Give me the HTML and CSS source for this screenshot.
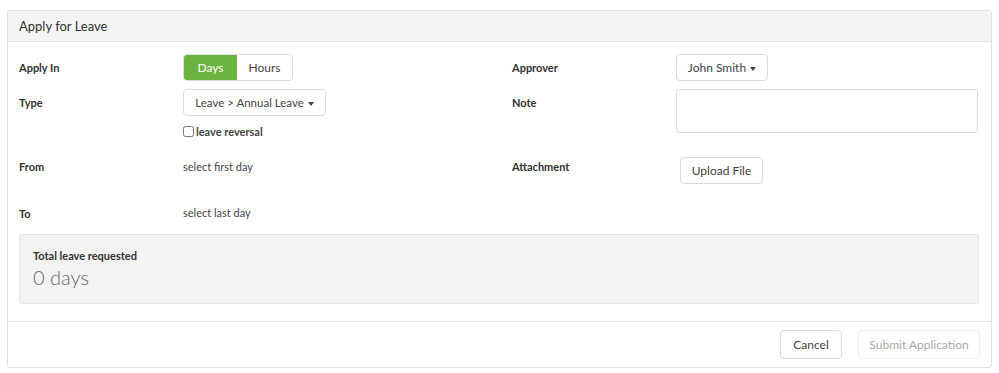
FILE: index.html
```html
<!DOCTYPE html>
<html lang="en">
<head>
  <meta charset="UTF-8">
  <title>Apply for Leave</title>
  <link rel="stylesheet" href="styles.css">
</head>
<body>
  <div class="panel">
    <div class="panel-heading">Apply for Leave</div>

    <div class="panel-body">
      <div class="form-grid">
        <div class="col col-left">
          <div class="row row-1">
            <div class="label">Apply In</div>
            <div class="value">
              <div class="toggle">
                <button class="toggle-btn active">Days</button>
                <button class="toggle-btn">Hours</button>
              </div>
            </div>
          </div>
          <div class="row row-2">
            <div class="label">Type</div>
            <div class="value">
              <button class="btn dropdown type-select">Leave &gt; Annual Leave <span class="caret"></span></button>
              <label class="check"><input type="checkbox"> leave reversal</label>
            </div>
          </div>
          <div class="row row-3">
            <div class="label">From</div>
            <div class="value text">select first day</div>
          </div>
          <div class="row row-4">
            <div class="label">To</div>
            <div class="value text">select last day</div>
          </div>
        </div>

        <div class="col col-right">
          <div class="row row-1">
            <div class="label">Approver</div>
            <div class="value">
              <button class="btn dropdown approver">John Smith <span class="caret"></span></button>
            </div>
          </div>
          <div class="row row-2">
            <div class="label">Note</div>
            <div class="value">
              <textarea class="note"></textarea>
            </div>
          </div>
          <div class="row row-3">
            <div class="label">Attachment</div>
            <div class="value">
              <button class="btn upload">Upload File</button>
            </div>
          </div>
        </div>
      </div>

      <div class="total">
        <div class="total-label">Total leave requested</div>
        <div class="total-value">0 days</div>
      </div>
    </div>

    <div class="panel-footer">
      <button class="btn cancel">Cancel</button>
      <button class="btn disabled">Submit Application</button>
    </div>
  </div>
</body>
</html>
```

FILE: styles.css
```css
body {
  margin: 0;
  padding: 10px 7px 0 7px;
  font-family: Lato, "Liberation Sans", sans-serif;
  color: #333;
  background: #fff;
}

.panel {
  width: 985px;
  border: 1px solid #e2e2e2;
  border-radius: 3px;
  box-sizing: border-box;
}

.panel-heading {
  height: 31px;
  padding: 0 11px;
  line-height: 30px;
  font-size: 13px;
  color: #333;
  background: #f5f5f5;
  border-bottom: 1px solid #e6e6e6;
  box-sizing: border-box;
}

.panel-body {
  padding: 12px 12px 17px 11px;
}

.form-grid {
  display: flex;
}

.col-left {
  width: 493px;
  flex-shrink: 0;
}

.col-right {
  flex: 1;
}

.row {
  display: flex;
  align-items: flex-start;
}

.row-1 { height: 35px; }
.row-2 { height: 65px; }
.row-3 { height: 46px; }
.row-4 { height: 34px; }

.label {
  width: 164px;
  flex-shrink: 0;
  padding-top: 7px;
  font-size: 11px;
  line-height: 14px;
  font-weight: bold;
  color: #333;
}

.row-3 .label { padding-top: 6px; }

.value {
  display: flex;
  flex-direction: column;
  align-items: flex-start;
}

.value.text {
  padding-top: 6px;
  font-size: 11px;
  line-height: 14px;
  color: #444;
}

.toggle {
  display: flex;
  height: 27px;
  border: 1px solid #ddd;
  border-radius: 4px;
  overflow: hidden;
  box-sizing: border-box;
}

.toggle-btn {
  border: none;
  background: #fff;
  font-family: inherit;
  font-size: 12px;
  color: #444;
  padding: 0;
}

.toggle-btn.active {
  background: #6db33f;
  color: #fff;
  width: 53px;
}

.toggle-btn:last-child {
  width: 55px;
}

.btn {
  height: 27px;
  padding: 0;
  border: 1px solid #ddd;
  border-radius: 4px;
  background: #fff;
  font-family: inherit;
  font-size: 12px;
  color: #444;
  box-sizing: border-box;
}

.type-select {
  width: 143px;
  font-size: 11.5px;
}

.approver {
  width: 92px;
}

.caret {
  display: inline-block;
  width: 0;
  height: 0;
  margin-left: 1px;
  vertical-align: middle;
  border-top: 4px solid #444;
  border-left: 3.5px solid transparent;
  border-right: 3.5px solid transparent;
}

.check {
  display: flex;
  align-items: center;
  gap: 2px;
  margin-top: 9px;
  font-size: 11px;
  font-weight: bold;
  color: #444;
}

.check input {
  width: 11px;
  height: 11px;
  margin: 0;
}

.note {
  width: 302px;
  height: 44px;
  border: 1px solid #ddd;
  border-radius: 3px;
  box-sizing: border-box;
  resize: none;
}

.upload {
  margin: 3px 0 0 4px;
  width: 83px;
}

.total {
  height: 70px;
  padding: 14px 13px;
  background: #f3f3f3;
  border: 1px solid #e6e6e6;
  border-radius: 3px;
  box-sizing: border-box;
}

.total-label {
  font-size: 11px;
  font-weight: bold;
  color: #333;
  line-height: 14px;
}

.total-value {
  margin-top: 2px;
  font-size: 20px;
  font-weight: 300;
  color: #666;
  line-height: 24px;
}

.panel-footer {
  display: flex;
  justify-content: flex-end;
  gap: 16px;
  padding: 8px 11px 8px 12px;
  border-top: 1px solid #e6e6e6;
}

.panel-footer .btn {
  height: 29px;
}

.cancel {
  width: 62px;
}

.disabled {
  width: 122px;
  color: #aaa;
  border-color: #eee;
}
```
